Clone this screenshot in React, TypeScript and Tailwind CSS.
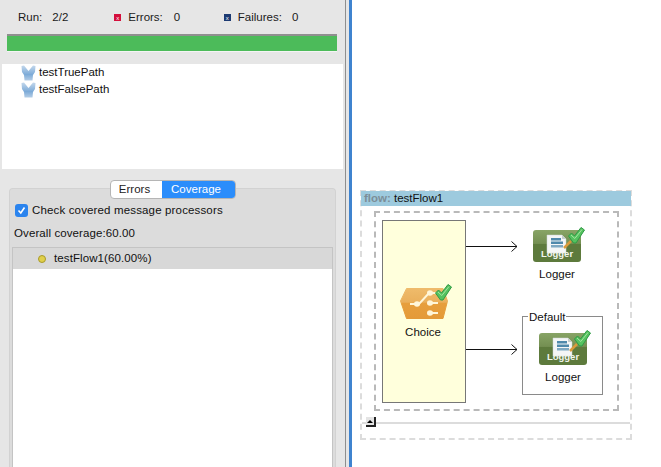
const font = { fontFamily: '"Liberation Sans", Arial, sans-serif' }

function CheckMark({ x, y }: { x: number; y: number }) {
    return (
        <g transform={`translate(${x} ${y})`}>
            <path d="M0.5 9 L3.5 6 L6.5 9 L13 0.5 L16.5 3 L8 16 L5.5 16 Z" fill="#55c25f" stroke="#2f9a45" strokeWidth="1" strokeLinejoin="round" />
            <path d="M3 8 L6.8 11.5 L14 2.5" fill="none" stroke="#a4e6a0" strokeWidth="1" />
        </g>
    )
}

function LoggerIcon({ id }: { id: string }) {
    return (
        <svg width="52" height="36" viewBox="0 0 52 36" className="block">
            <defs>
                <linearGradient id={id} x1="0" y1="0" x2="0" y2="1">
                    <stop offset="0" stopColor="#88a466" />
                    <stop offset="0.42" stopColor="#748f52" />
                    <stop offset="0.45" stopColor="#5d7a3c" />
                    <stop offset="1" stopColor="#5d7a3c" />
                </linearGradient>
            </defs>
            <rect x="0" y="4" width="48" height="32" rx="3" fill={`url(#${id})`} />
            <path d="M14 9 H29 L33 13 V27 H14 Z" fill="#f4f6f6" stroke="#cfd6d6" strokeWidth="0.5" />
            <path d="M29 9 L33 13 H29 Z" fill="#c5cdcd" />
            <rect x="18" y="12" width="10" height="2.5" fill="#4f89ab" />
            <rect x="18" y="15.5" width="12" height="2.5" fill="#4f89ab" />
            <rect x="18" y="19" width="12" height="2.5" fill="#7fa9c2" />
            <path d="M31 22 L38 15" stroke="#d99a3c" strokeWidth="2.5" />
            <CheckMark x={35} y={1} />
            <text x="24" y="31" textAnchor="middle" fontSize="9.5" fontWeight="700" fill="#f2f5ee" style={font}>Logger</text>
        </svg>
    )
}

function ChoiceIcon() {
    return (
        <svg width="52" height="36" viewBox="0 0 52 36" className="block">
            <defs>
                <linearGradient id="choiceFill" x1="0" y1="0" x2="0" y2="1">
                    <stop offset="0" stopColor="#efbb6b" />
                    <stop offset="0.45" stopColor="#eab05c" />
                    <stop offset="0.5" stopColor="#e79f3c" />
                    <stop offset="1" stopColor="#e49a38" />
                </linearGradient>
            </defs>
            <path d="M6.5 4.5 H43 L47.5 17 L43 34.5 H6.5 L0.5 17 Z" fill="url(#choiceFill)" stroke="url(#choiceFill)" strokeWidth="1" strokeLinejoin="round" />
            <path d="M10 20 H19 L29 9 H38" fill="none" stroke="#fff6d8" strokeWidth="2" />
            <path d="M29 19 H38 M29 29 H38" fill="none" stroke="#fff6d8" strokeWidth="2" />
            <ellipse cx="17" cy="20" rx="3" ry="2.8" fill="#fff6d8" />
            <ellipse cx="30" cy="9" rx="3" ry="2.8" fill="#fff6d8" />
            <ellipse cx="30" cy="19" rx="3" ry="2.8" fill="#fff6d8" />
            <ellipse cx="30" cy="29" rx="3" ry="2.8" fill="#fff6d8" />
            <CheckMark x={35} y={0} />
        </svg>
    )
}

function TestIcon({ id }: { id: string }) {
    return (
        <svg width="15" height="16" viewBox="0 0 15 16" className="shrink-0">
            <defs>
                <linearGradient id={id} x1="0" y1="0" x2="0" y2="1">
                    <stop offset="0" stopColor="#c4d8ec" />
                    <stop offset="0.6" stopColor="#7dabd8" />
                    <stop offset="1" stopColor="#b4cde6" />
                </linearGradient>
            </defs>
            <path d="M0.5 1 L3 0.5 L7.5 6 L12 0.5 L14.5 1 L14 7 L12 10 L11.5 15.5 H3.5 L3 10 L1 7 Z" fill={`url(#${id})`} />
        </svg>
    )
}

function Arrow({ className }: { className: string }) {
    return (
        <svg width="53" height="11" viewBox="0 0 53 11" className={`absolute ${className}`}>
            <path d="M0 5.5 H51 M45.5 0.5 L51 5.5 L45.5 10.5" fill="none" stroke="#111" strokeWidth="1" />
        </svg>
    )
}

export default function App() {
    return (
        <div style={font} className="flex h-[467px] w-[661px] overflow-hidden bg-white text-[11.5px] text-[#111]">
            <div className="flex h-full w-[349px] shrink-0 bg-[#e6e6e6]">
                <div className="flex w-[345px] flex-col pl-[2px] pr-[2px]">
                    <div className="flex h-[34px] items-center pt-[1px] text-[#1a1a1a]">
                        <span className="ml-[16px]">Run:</span>
                        <span className="ml-[10px] w-[62px]">2/2</span>
                        <span className="flex h-[7px] w-[7px] items-center justify-center bg-[#d40f3c] text-[6px] leading-none text-white">x</span>
                        <span className="ml-[7px]">Errors:</span>
                        <span className="ml-[11px] w-[50px]">0</span>
                        <span className="flex h-[7px] w-[7px] items-center justify-center bg-[#1c3a72] text-[6px] leading-none text-white">x</span>
                        <span className="ml-[7px]">Failures:</span>
                        <span className="ml-[10px]">0</span>
                    </div>
                    <div className="ml-[5px] h-[18px] w-[330px] border-t-2 border-b border-t-[#8f8f8f] border-b-[#f4f4f4] bg-[#4cbb5a]" />
                    <div className="mt-[12px] flex h-[105px] flex-col bg-white pl-[19px]">
                        <div className="flex h-[17px] items-center gap-[3px]"><TestIcon id="testA" />testTruePath</div>
                        <div className="flex h-[17px] items-center gap-[3px]"><TestIcon id="testB" />testFalsePath</div>
                    </div>
                    <div className="relative ml-[7px] mt-[19px] flex h-[279px] w-[327px] flex-col rounded-t-[4px] border border-b-0 border-[#d2d2d2] bg-[#dcdcdc] pl-[5px] pt-[13px]">
                        <div className="absolute left-[100px] top-[-9px] flex h-[19px] w-[126px] overflow-hidden rounded-[4px] border border-[#b5b5b5] bg-white text-center leading-[17px]">
                            <span className="w-[51px] pr-[4px] text-[#222]">Errors</span>
                            <span className="flex-1 bg-[#2b8dfb] pr-[5px] text-white">Coverage</span>
                        </div>
                        <label className="flex items-center gap-[4px]">
                            <span className="flex h-[13px] w-[13px] items-center justify-center rounded-[3px] bg-[#2b84ee]">
                                <svg width="9" height="9" viewBox="0 0 9 9"><path d="M1.5 4.5 L3.8 7 L7.5 1.5" fill="none" stroke="#fff" strokeWidth="1.6" /></svg>
                            </span>
                            <span className="tracking-[0.15px]">Check covered message processors</span>
                        </label>
                        <div className="-ml-[1px] mt-[6px] tracking-[0.1px]">Overall coverage:60.00</div>
                        <div className="-ml-[3px] mt-[4px] flex h-[220px] w-[321px] flex-col border border-b-0 border-[#c4c4c4] bg-white">
                            <div className="flex h-[21px] items-center gap-[8px] bg-[#d8d8d8] pl-[25px] pt-[1px] tracking-[0.1px]">
                                <span className="h-[8px] w-[8px] rounded-full border border-[#a89a2a] bg-[#e0cf4a]" />
                                testFlow1(60.00%)
                            </div>
                        </div>
                    </div>
                </div>
                <div className="w-[1px] bg-[#8e8e8e]" />
            </div>
            <div className="w-[3px] shrink-0 bg-[#3f83cf]" />
            <div className="relative flex-1">
                <div className="absolute left-[8px] top-[190px] h-[250px] w-[272px] border-2 border-dashed border-[#dcdcdc]">
                    <div className="-mx-[1px] -mt-[1px] flex h-[15px] items-center bg-[#9dcade] pl-[3px] pt-[1px] leading-none">
                        <span className="w-[30px] font-bold text-[#7c8e98]">flow:</span>
                        <span className="text-[#111]">testFlow1</span>
                    </div>
                    <div className="absolute left-[12px] top-[19px] h-[200px] w-[245px] border-2 border-dashed border-[#b9b9b9]" />
                    <div className="absolute left-[20px] top-[28px] h-[183px] w-[84px] border border-[#777] bg-[#ffffdc]" />
                    <Arrow className="left-[104px] top-[49px]" />
                    <Arrow className="left-[104px] top-[152px]" />
                    <div className="absolute left-[38px] top-[92px] flex flex-col items-center">
                        <ChoiceIcon />
                        <span className="mt-[4px] pr-[6px]">Choice</span>
                    </div>
                    <div className="absolute left-[171px] top-[34px] flex flex-col items-center">
                        <LoggerIcon id="loggerA" />
                        <span className="mt-[4px] pr-[4px]">Logger</span>
                    </div>
                    <div className="absolute left-[160px] top-[124px] h-[79px] w-[81px] border border-[#8a8a8a]">
                        <span className="absolute left-[5px] top-[-6px] bg-white px-[1px] leading-[13px]">Default</span>
                    </div>
                    <div className="absolute left-[177px] top-[137px] flex flex-col items-center">
                        <LoggerIcon id="loggerB" />
                        <span className="mt-[4px] pr-[4px]">Logger</span>
                    </div>
                    <div className="absolute left-0 top-[230px] h-[2px] w-[268px] bg-[#dcdcdc]" />
                    <div className="absolute left-[4px] top-[225px] flex h-[10px] w-[10px] items-center justify-center border-b-2 border-r-2 border-[#222] bg-[#e4e4e4]">
                        <span className="h-0 w-0 border-x-[3px] border-b-[3px] border-x-transparent border-b-black" />
                    </div>
                </div>
            </div>
        </div>
    )
}
